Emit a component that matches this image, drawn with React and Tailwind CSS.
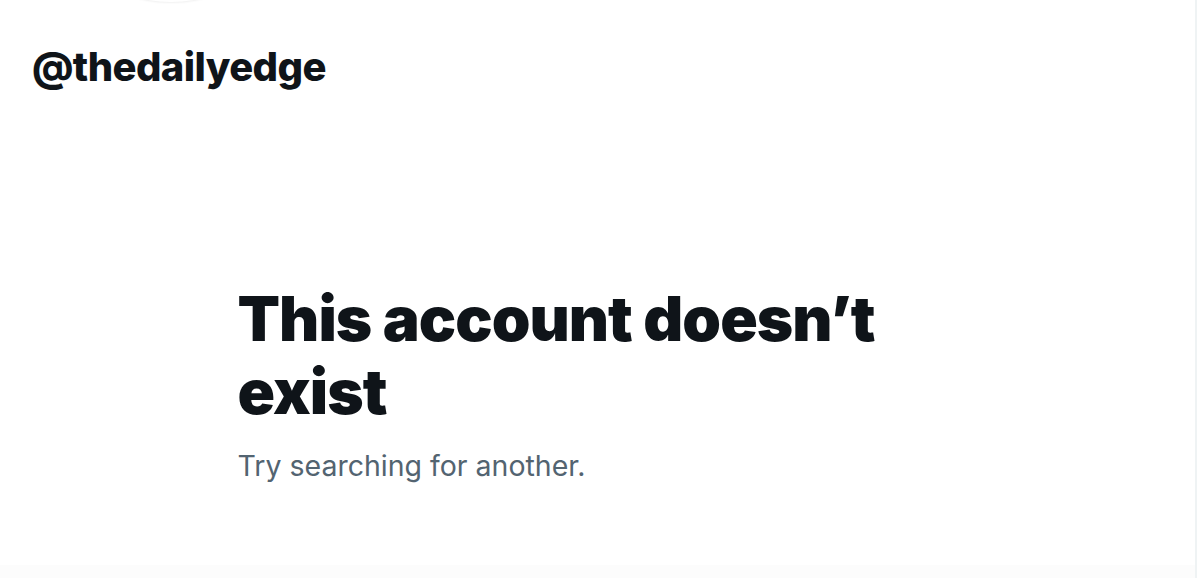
import React from "react";

const font = { fontFamily: "Inter, 'Noto Sans', sans-serif" };

export default function App() {
  return (
    <div className="min-h-screen w-full bg-white overflow-hidden" style={font}>
      <div className="w-[1197px] h-[578px] border-r-2 border-[#eff3f4] flex flex-col">
        {/* avatar bottom edge */}
        <div className="ml-[38px] -mt-[264px] h-[266px] w-[266px] rounded-full bg-white shadow-[0_1px_2px_rgba(0,0,0,0.06)] shrink-0" />

        <div className="pl-[32px] pt-[41px]">
          <h2 className="text-[40px] leading-[48px] font-extrabold tracking-[-0.6px] text-[#0f1419]">
            @thedailyedge
          </h2>
        </div>

        <div className="flex-1 flex justify-center">
          <div className="w-[800px] px-[40px] pt-[191px]">
            <h1 className="text-[62px] leading-[73px] font-black tracking-[-0.95px] text-[#0f1419]">
              This account doesn’t exist
            </h1>
            <p className="mt-[18px] text-[28.5px] leading-[40px] text-[#536471]">
              Try searching for another.
            </p>
          </div>
        </div>

        <div className="h-[13px] bg-[#fcfcfc]" />
      </div>
    </div>
  );
}
